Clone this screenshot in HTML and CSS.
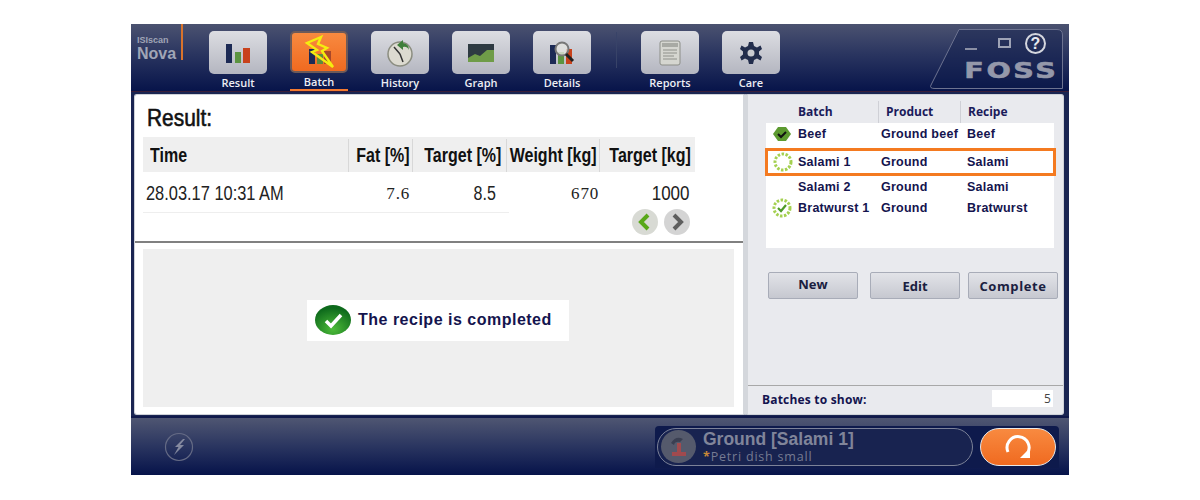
FILE: index.html
```html
<!DOCTYPE html>
<html lang="en">
<head>
  <meta charset="UTF-8">
  <title>ISIscan Nova</title>
  <link rel="stylesheet" href="styles.css">
</head>
<body>
  <div class="app">
    <header class="topbar">
      <div class="logo">
        <span class="logo-small">ISIscan</span>
        <span class="logo-big">Nova</span>
      </div>
      <nav class="nav">
        <div class="nav-item">
          <div class="nav-btn">
            <svg width="26" height="20" viewBox="0 0 26 20"><rect x="1" y="1" width="6" height="19" fill="#1c2a55"/><rect x="10" y="9" width="6" height="11" fill="#5c9440"/><rect x="18" y="5" width="7" height="15" fill="#c8421c"/></svg>
          </div>
          <span>Result</span>
        </div>
        <div class="nav-item active">
          <div class="nav-btn">
            <svg width="36" height="36" viewBox="0 0 36 36"><rect x="8" y="15" width="6" height="15" fill="#1c2a55"/><rect x="16" y="20" width="6" height="10" fill="#5c8a40"/><rect x="23" y="17" width="7" height="13" fill="#a8482a"/><path d="M20 3 L6 9 L16 16 L11 18 L32 33 L21 17 L26 14 L17 10 Z" fill="none" stroke="#f4ec10" stroke-width="2.4"/></svg>
          </div>
          <span>Batch</span>
        </div>
        <div class="nav-item">
          <div class="nav-btn">
            <svg width="28" height="28" viewBox="0 0 28 28"><circle cx="14" cy="15" r="12" fill="#dcdad0" stroke="#8b8d80" stroke-width="1.5"/><path d="M14 15 L8 8 M14 15 L17 23" stroke="#333" stroke-width="1.5"/><path d="M11 6 L17 1 L17 4 Q23 5 23 11 Q21 7 17 8 L17 11 Z" fill="#3f7f3a"/></svg>
          </div>
          <span>History</span>
        </div>
        <div class="nav-item">
          <div class="nav-btn">
            <svg width="26" height="18" viewBox="0 0 26 18"><rect width="26" height="18" fill="#2e3a42"/><path d="M0 14 L7 10 L12 12 L19 6 L26 6 L26 18 L0 18 Z" fill="#6f9c48"/></svg>
          </div>
          <span>Graph</span>
        </div>
        <div class="nav-item">
          <div class="nav-btn">
            <svg width="26" height="26" viewBox="0 0 26 26"><rect x="1" y="5" width="6" height="19" fill="#1c2a55"/><rect x="9" y="12" width="6" height="12" fill="#5c9440"/><rect x="17" y="9" width="6" height="15" fill="#c8421c"/><circle cx="13" cy="9" r="6.5" fill="#e4e4e0" fill-opacity=".8" stroke="#777" stroke-width="2"/><path d="M17 14 L24 21" stroke="#222" stroke-width="3"/></svg>
          </div>
          <span>Details</span>
        </div>
        <div class="nav-sep"></div>
        <div class="nav-item">
          <div class="nav-btn">
            <svg width="22" height="26" viewBox="0 0 22 26"><rect x="1" y="1" width="20" height="24" rx="2" fill="#d5d6d0" stroke="#8c8e88"/><rect x="3" y="3" width="16" height="4" fill="#a8aaa4"/><path d="M4 10 H18 M4 13 H18 M4 16 H15 M4 19 H18" stroke="#8e908a"/></svg>
          </div>
          <span>Reports</span>
        </div>
        <div class="nav-item">
          <div class="nav-btn">
            <svg width="24" height="24" viewBox="0 0 24 24"><path d="M10 1 H14 L15 5 L18 6.500 L21.500 4.500 L23 8 L20 10.500 V13.500 L23 16 L21.500 19.500 L18 17.500 L15 19 L14 23 H10 L9 19 L6 17.500 L2.500 19.500 L1 16 L4 13.500 V10.500 L1 8 L2.500 4.500 L6 6.500 L9 5 Z" fill="#222d4c"/><circle cx="12" cy="12" r="3.500" fill="#c9cbd0"/></svg>
          </div>
          <span>Care</span>
        </div>
      </nav>
      <div class="brand">
        <svg class="brand-shape" width="134" height="60" viewBox="0 0 134 60"><path d="M30 .5 H128 Q133.500 .5 133.500 6 V59.500 H6 Q0 59.500 2 56 Z" fill="#101c4c" fill-opacity=".45" stroke="#6d7390"/></svg>
        <div class="win-controls">
          <span class="win-min"></span>
          <span class="win-max"></span>
          <span class="win-help">?</span>
        </div>
        <div class="foss">FOSS</div>
      </div>
    </header>

    <main class="content">
      <section class="left-panel">
        <div class="result-area">
          <h1 class="result-title"><span>Result:</span></h1>
          <div class="result-head">
            <div class="cell cell-time"><span>Time</span></div>
            <div class="cell"><span>Fat [%]</span></div>
            <div class="cell"><span>Target [%]</span></div>
            <div class="cell"><span>Weight [kg]</span></div>
            <div class="cell"><span>Target [kg]</span></div>
          </div>
          <div class="result-row">
            <div class="cell cell-time"><span>28.03.17 10:31 AM</span></div>
            <div class="cell serif">7.6</div>
            <div class="cell"><span>8.5</span></div>
            <div class="cell serif">670</div>
            <div class="cell"><span>1000</span></div>
          </div>
          <div class="pager">
            <svg width="28" height="26" viewBox="0 0 28 26"><circle cx="14" cy="13" r="13" fill="#d8dad4"/><path d="M17 6 L10 13 L17 20" fill="none" stroke="#58a818" stroke-width="4"/></svg>
            <svg width="28" height="26" viewBox="0 0 28 26"><circle cx="14" cy="13" r="13" fill="#d4d4d4"/><path d="M11 6 L18 13 L11 20" fill="none" stroke="#5e5e5e" stroke-width="4"/></svg>
          </div>
        </div>
        <div class="status-area">
          <div class="status-msg">
            <svg width="36" height="30" viewBox="0 0 36 30"><defs><radialGradient id="okGrad" cx="50%" cy="80%" r="70%"><stop offset="0" stop-color="#4cbb38"/><stop offset="1" stop-color="#0e6a1c"/></radialGradient></defs><ellipse cx="18" cy="15" rx="18" ry="15" fill="url(#okGrad)"/><path d="M11 16 L16 21 L26 10" fill="none" stroke="#fff" stroke-width="3.500"/></svg>
            <span>The recipe is completed</span>
          </div>
        </div>
      </section>

      <aside class="right-panel">
        <div class="batch-head">
          <span class="bh-batch">Batch</span>
          <span class="bh-product">Product</span>
          <span class="bh-recipe">Recipe</span>
        </div>
        <div class="batch-list">
          <div class="batch-row row-beef">
            <svg class="row-icon" width="18" height="14" viewBox="0 0 18 14"><path d="M5 0 H13 L18 7 L13 14 H5 L0 7 Z" fill="#5c9a30"/><path d="M5 7 L8 10 L13 5" fill="none" stroke="#111" stroke-width="2"/></svg>
            <span>Beef</span><span>Ground beef</span><span>Beef</span>
          </div>
          <div class="batch-row row-selected">
            <svg class="row-icon" width="20" height="20" viewBox="0 0 20 20"><circle cx="10" cy="10" r="8" fill="none" stroke="#a4d050" stroke-width="3" stroke-dasharray="2.500 1.500"/></svg>
            <span>Salami 1</span><span>Ground</span><span>Salami</span>
          </div>
          <div class="batch-row row-plain">
            <i></i>
            <span>Salami 2</span><span>Ground</span><span>Salami</span>
          </div>
          <div class="batch-row row-plain">
            <svg class="row-icon" width="20" height="20" viewBox="0 0 20 20"><circle cx="10" cy="10" r="8" fill="none" stroke="#a4d050" stroke-width="3" stroke-dasharray="2.500 1.500"/><path d="M6 10 L9 13 L14 7" fill="none" stroke="#4e9a28" stroke-width="2.200"/></svg>
            <span>Bratwurst 1</span><span>Ground</span><span>Bratwurst</span>
          </div>
        </div>
        <div class="batch-buttons">
          <button class="btn btn-new">New</button>
          <button class="btn btn-edit">Edit</button>
          <button class="btn btn-complete">Complete</button>
        </div>
        <div class="batch-count">
          <span>Batches to show:</span>
          <div class="count-input">5</div>
        </div>
      </aside>
    </main>

    <footer class="bottombar">
      <svg class="bolt" width="30" height="30" viewBox="0 0 30 30"><circle cx="15" cy="15" r="13.500" fill="none" stroke="#656b85" stroke-width="1.200"/><path d="M19 7 L11 15 L14.500 15 L10 23 L20 13 L16 13 L21 7 Z" fill="#858aa0"/></svg>
      <div class="job-bar">
        <div class="job-pill">
          <div class="job-icon">
            <svg width="22" height="24" viewBox="0 0 22 24"><path d="M3 8 Q8 0 15 4 L12 7 Q7 6 6 10 Z" fill="#3a3f52"/><path d="M9 8 H13 V17 H18 V21 H4 V17 H9 Z" fill="#a04a4e"/></svg>
          </div>
          <div class="job-text">
            <div class="job-name">Ground [Salami 1]</div>
            <div class="job-sub"><b>*</b>Petri dish small</div>
          </div>
        </div>
        <button class="run-btn">
          <svg width="28" height="28" viewBox="0 0 28 28"><path d="M4 19 A11 11 0 1 1 23 21" fill="none" stroke="#fff" stroke-width="3"/><path d="M16 25 H26 V15 Z" fill="#fff"/></svg>
        </button>
      </div>
    </footer>
  </div>
</body>
</html>
```
FILE: styles.css
```css
* {
  box-sizing: border-box;
}
body {
  margin: 0;
  background: #ffffff;
  font-family: "Liberation Sans", Arial, sans-serif;
}
.app {
  width: 938px;
  height: 451px;
  margin: 24px auto 0;
  display: flex;
  flex-direction: column;
  background: #1a2552;
}

/* top bar */
.topbar {
  height: 68px;
  display: flex;
  position: relative;
  background: linear-gradient(#4b5270, #2a3560 45%, #07144a);
  border-bottom: 1px solid #3a1f3a;
}
.logo {
  width: 46px;
  height: 36px;
  margin-left: 6px;
  padding-top: 11px;
  border-right: 2px solid #d8732c;
  display: flex;
  flex-direction: column;
  color: #a0a5b6;
}
.logo-small {
  font-size: 9px;
  font-weight: bold;
  line-height: 10px;
}
.logo-big {
  font-size: 16px;
  font-weight: bold;
  line-height: 18px;
}
.nav {
  display: flex;
  margin-left: 26px;
  padding-top: 7px;
}
.nav-item {
  width: 58px;
  margin-right: 23px;
  display: flex;
  flex-direction: column;
  align-items: center;
  color: #eceef4;
  font-family: "Open Sans", sans-serif;
  font-size: 11px;
  font-weight: 600;
  line-height: 15px;
}
.nav-btn {
  width: 58px;
  height: 43px;
  margin-bottom: 1px;
  display: flex;
  align-items: center;
  justify-content: center;
  border-radius: 5px;
  background: linear-gradient(#dcdde2, #b4b6c0);
}
.nav-item.active {
  height: 60px;
  border-bottom: 2px solid #f47a30;
}
.nav-item.active .nav-btn {
  background: linear-gradient(#f88a40, #f06a20);
  border: 2px solid #6e5a58;
}
.nav-sep {
  width: 1px;
  height: 36px;
  margin: 1px 24px 0 2px;
  background: #384368;
}
.brand {
  width: 134px;
  height: 60px;
  margin: 5px 6px 0 auto;
  position: relative;
  display: flex;
  flex-direction: column;
  align-items: flex-end;
}
.brand-shape {
  position: absolute;
  left: 0;
  top: 0;
}
.win-controls {
  position: relative;
  width: 81px;
  height: 28px;
  margin-right: 17px;
  display: flex;
  align-items: center;
}
.win-min {
  width: 12px;
  height: 2px;
  margin-top: 12px;
  background: #8a8fa4;
}
.win-max {
  width: 13px;
  height: 10px;
  margin-left: 21px;
  border: 2px solid #9ea3b6;
}
.win-help {
  width: 21px;
  height: 21px;
  margin-left: 14px;
  border: 2px solid #d4d6de;
  border-radius: 50%;
  color: #e8e9ee;
  font-size: 16px;
  font-weight: bold;
  line-height: 17px;
  text-align: center;
}
.foss {
  position: relative;
  margin: 3px 5px 0 0;
  color: #9498aa;
  font-family: "DejaVu Sans", sans-serif;
  font-size: 22px;
  font-weight: bold;
  line-height: 22px;
  letter-spacing: 2px;
  -webkit-text-stroke: .6px #9498aa;
  transform: scaleX(1.3);
  transform-origin: right;
}

/* main area */
.content {
  flex: 1;
  display: flex;
  padding: 2px 5px 1px 3px;
  background: #1a2552;
}
.left-panel {
  width: 611px;
  display: flex;
  flex-direction: column;
  background: #ffffff;
  border: 1px solid #cfd2d8;
  border-right: 2px solid #d4d7dc;
  border-radius: 3px 0 0 3px;
}
.result-area {
  height: 148px;
  padding: 8px 8px 0 8px;
  border-bottom: 2px solid #808080;
}
.result-title {
  margin: 0 0 0 4px;
  height: 34px;
  color: #111;
  font-size: 24px;
  font-weight: normal;
  line-height: 30px;
  -webkit-text-stroke: .6px #111;
}
.result-title span {
  display: inline-block;
  transform: scaleX(.87);
  transform-origin: left;
}
.result-head,
.result-row {
  width: 552px;
  display: grid;
  grid-template-columns: 205px 64px 94px 93px 95px;
}
.result-head {
  height: 35px;
  padding-top: 2px;
  background: #efefef;
  color: #111;
  font-size: 20px;
  font-weight: bold;
}
.result-head .cell + .cell {
  border-left: 1px solid #d8d8d8;
}
.result-head .cell:nth-child(2),
.result-head .cell:nth-child(4) {
  padding-right: 2px;
}
.result-head .cell:nth-child(5) {
  padding-right: 3px;
}
.result-row {
  height: 41px;
  padding-top: 2px;
  color: #222;
  font-size: 20px;
  background: linear-gradient(#eeeeee, #eeeeee) no-repeat left bottom / 366px 1px;
}
.cell {
  display: flex;
  align-items: center;
  justify-content: flex-end;
  padding-right: 5px;
  white-space: nowrap;
}
.cell span {
  display: inline-block;
  transform: scaleX(.8);
  transform-origin: right;
}
.cell-time {
  justify-content: flex-start;
  padding-left: 7px;
}
.cell-time span {
  transform-origin: left;
}
.result-row .cell-time {
  padding-left: 3px;
}
.result-row .cell-time span {
  transform: scaleX(.82);
}
.result-row .cell:nth-child(2) {
  padding-right: 2px;
}
.result-row .cell:nth-child(3) {
  padding-right: 10px;
}
.result-row .cell:nth-child(4) {
  padding-right: 0;
}
.result-row .cell:nth-child(5) span {
  transform: scaleX(.85);
}
.serif {
  font-family: "Liberation Serif", serif;
  font-size: 17px;
  letter-spacing: .8px;
}
.pager {
  width: 552px;
  display: flex;
  justify-content: flex-end;
  gap: 4px;
  padding-right: 4px;
  margin-top: -4px;
}
.status-area {
  flex: 1;
  margin: 6px 9px 7px 8px;
  display: flex;
  justify-content: center;
  align-items: flex-start;
  background: #efefef;
}
.status-msg {
  width: 262px;
  height: 41px;
  margin: 51px 0 0 -1px;
  padding: 0 0 2px 8px;
  display: flex;
  align-items: center;
  gap: 7px;
  background: #ffffff;
  color: #14144e;
  font-size: 16px;
  font-weight: bold;
  letter-spacing: .5px;
}

/* batch panel */
.right-panel {
  flex: 1;
  display: flex;
  flex-direction: column;
  padding: 0 0 0 18px;
  background: #e9eaee;
  border: 1px solid #cfd2d8;
  border-left: 3px solid #d4d7dc;
  border-radius: 0 3px 3px 0;
}
.batch-head {
  height: 28px;
  margin-right: 7px;
  padding-top: 6px;
  display: grid;
  grid-template-columns: 112px 82px 1fr;
  color: #1a1a5a;
  font-family: "Open Sans", sans-serif;
  font-size: 12px;
  font-weight: 700;
  line-height: 22px;
}
.bh-batch {
  padding-left: 32px;
}
.bh-product,
.bh-recipe {
  padding-left: 7px;
  border-left: 1px solid #cfd0d6;
}
.batch-list {
  width: 288px;
  height: 125px;
  background: #ffffff;
}
.batch-row {
  display: grid;
  grid-template-columns: 32px 83px 86px 1fr;
  align-items: center;
  color: #14144e;
  font-size: 12.500px;
  font-weight: bold;
  letter-spacing: .25px;
  white-space: nowrap;
}
.row-icon {
  justify-self: center;
}
.row-beef {
  height: 22px;
  margin-bottom: 3px;
}
.row-selected {
  height: 28px;
  margin: 0 -2px 0 -1px;
  border: 3px solid #f47a20;
  grid-template-columns: 30px 83px 86px 1fr;
}
.row-plain {
  height: 22px;
}
.row-plain + .row-plain {
  height: 18px;
}
.batch-buttons {
  display: flex;
  margin: 24px 0 0 2px;
}
.btn {
  width: 90px;
  height: 27px;
  padding: 0;
  border: 1px solid #a8acb8;
  border-radius: 2px;
  background: linear-gradient(#e2e3e8, #c6c8d0);
  color: #1a2040;
  font-family: "Open Sans", sans-serif;
  font-size: 13px;
  font-weight: 700;
}
.btn-new {
  padding-bottom: 3px;
}
.btn-edit {
  margin-left: 12px;
}
.btn-complete {
  margin-left: 8px;
  letter-spacing: .6px;
}
.batch-count {
  height: 29px;
  margin: auto 0 0 -18px;
  padding: 4px 10px 0 14px;
  display: flex;
  justify-content: space-between;
  align-items: flex-start;
  border-top: 1px solid #a8a8a8;
  color: #14144e;
  font-family: "Open Sans", sans-serif;
  font-size: 12px;
  font-weight: 700;
  line-height: 20px;
  letter-spacing: .2px;
}
.count-input {
  width: 61px;
  height: 17px;
  padding-right: 2px;
  background: #ffffff;
  color: #444;
  font-weight: 400;
  line-height: 17px;
  text-align: right;
}

/* bottom bar */
.bottombar {
  height: 59px;
  display: flex;
  align-items: center;
  padding: 0 10px 0 33px;
  background: linear-gradient(#4f5672, #2a3560 50%, #06134a);
  border-top: 2px solid #10194a;
}
.bolt {
  margin-right: auto;
}
.job-bar {
  display: flex;
  padding: 2px 3px 2px 2px;
  background: #0e1a4c;
  border-radius: 4px 4px 0 0;
}
.job-pill {
  width: 316px;
  height: 38px;
  display: flex;
  align-items: center;
  gap: 7px;
  padding-left: 3px;
  background: #182350;
  border: 1px solid #7c8298;
  border-radius: 19px;
}
.job-icon {
  width: 35px;
  height: 33px;
  display: flex;
  align-items: center;
  justify-content: center;
  background: #555a6c;
  border-radius: 50%;
}
.job-name {
  color: #80859a;
  font-size: 17.500px;
  font-weight: bold;
  line-height: 20px;
}
.job-sub {
  color: #767b92;
  font-family: "Open Sans", sans-serif;
  font-size: 12.500px;
  line-height: 16px;
  letter-spacing: .8px;
}
.job-sub b {
  color: #c88838;
}
.run-btn {
  width: 76px;
  height: 38px;
  margin-left: 7px;
  padding: 0;
  display: flex;
  align-items: center;
  justify-content: center;
  border: 1px solid #e8e8e8;
  border-radius: 19px;
  background: linear-gradient(#f88a40, #f06a20);
}
```
